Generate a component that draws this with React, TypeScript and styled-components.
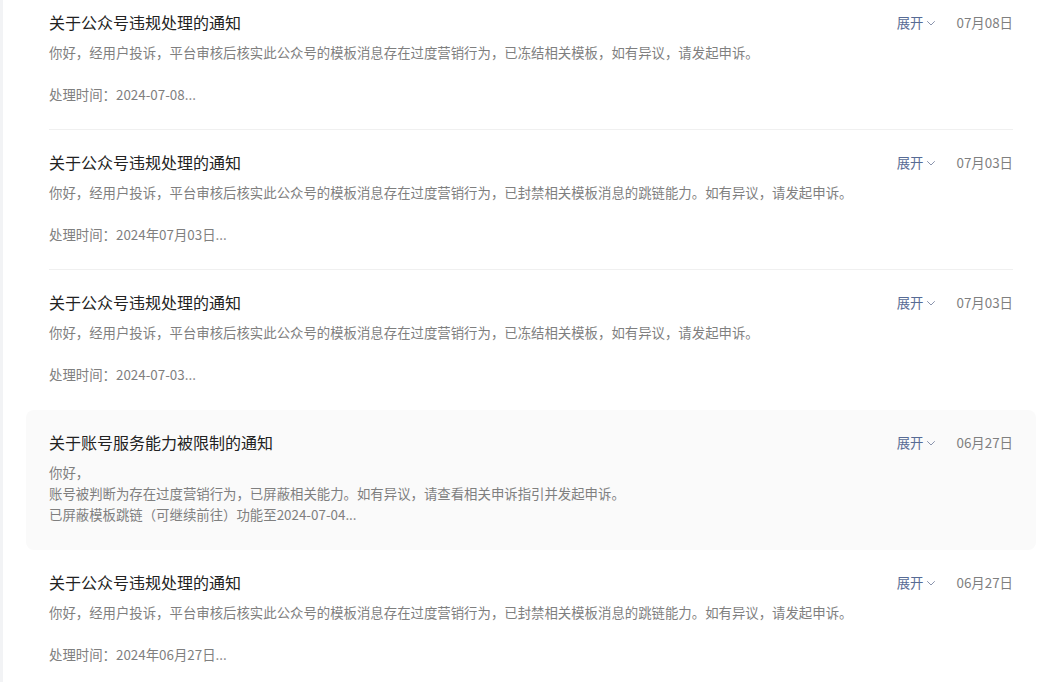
import React from "react";
import styled, { createGlobalStyle } from "styled-components";

const GlobalStyle = createGlobalStyle`
  html, body {
    margin: 0;
    padding: 0;
    background: #ffffff;
    overflow: hidden;
  }
  body {
    font-family: "Noto Sans CJK SC", "Noto Sans", "Liberation Sans", sans-serif;
    -webkit-font-smoothing: antialiased;
  }
`;

const Page = styled.div`
  display: flex;
  width: 1050px;
  height: 682px;
  overflow: hidden;
`;

const SideEdge = styled.div`
  width: 3px;
  flex: none;
  background: #f2f3f5;
`;

const Main = styled.main`
  flex: 1;
  padding: 0 14px 0 23px;
  overflow: hidden;
`;

const List = styled.ul`
  list-style: none;
  margin: -10px 0 0;
  padding: 0;
`;

const Item = styled.li<{ $active?: boolean }>`
  padding: 0 23px;
  border-radius: 8px;
  background: ${(p) => (p.$active ? "#fafafa" : "transparent")};
`;

const Inner = styled.div<{ $noDivider?: boolean }>`
  padding: 20px 0 24px;
  border-bottom: 1px solid ${(p) => (p.$noDivider ? "transparent" : "#f0f0f0")};
`;

const Header = styled.div`
  display: flex;
  align-items: center;
  justify-content: space-between;
  height: 24px;
`;

const Title = styled.h3`
  margin: 0;
  font-size: 16px;
  font-weight: 400;
  line-height: 24px;
  color: #222222;
`;

const Meta = styled.div`
  display: flex;
  align-items: center;
  gap: 21px;
`;

const Expand = styled.button`
  display: flex;
  align-items: center;
  gap: 4px;
  padding: 0;
  border: none;
  background: none;
  font-family: inherit;
  font-size: 13.4px;
  line-height: 20px;
  color: #576b95;
  cursor: pointer;
`;

const Chevron = styled.svg`
  width: 8px;
  height: 5px;
  margin-top: 2px;
  display: block;
`;

const DateText = styled.span`
  font-size: 13.4px;
  line-height: 20px;
  color: #7f7f7f;
`;

const Desc = styled.p`
  margin: 8px 0 0;
  font-size: 13.4px;
  line-height: 21px;
  color: #7f7f7f;
  white-space: pre-line;
`;

const FREEZE =
  "你好，经用户投诉，平台审核后核实此公众号的模板消息存在过度营销行为，已冻结相关模板，如有异议，请发起申诉。";
const BAN =
  "你好，经用户投诉，平台审核后核实此公众号的模板消息存在过度营销行为，已封禁相关模板消息的跳链能力。如有异议，请发起申诉。";

const items = [
  {
    title: "关于公众号违规处理的通知",
    date: "07月08日",
    body: `${FREEZE}\n\n处理时间：2024-07-08...`,
  },
  {
    title: "关于公众号违规处理的通知",
    date: "07月03日",
    body: `${BAN}\n\n处理时间：2024年07月03日...`,
  },
  {
    title: "关于公众号违规处理的通知",
    date: "07月03日",
    body: `${FREEZE}\n\n处理时间：2024-07-03...`,
  },
  {
    title: "关于账号服务能力被限制的通知",
    date: "06月27日",
    body:
      "你好，\n账号被判断为存在过度营销行为，已屏蔽相关能力。如有异议，请查看相关申诉指引并发起申诉。\n已屏蔽模板跳链（可继续前往）功能至2024-07-04...",
  },
  {
    title: "关于公众号违规处理的通知",
    date: "06月27日",
    body: `${BAN}\n\n处理时间：2024年06月27日...`,
  },
];

const ACTIVE = 3;

export default function App() {
  return (
    <>
      <GlobalStyle />
      <Page>
        <SideEdge />
        <Main>
          <List>
            {items.map((it, i) => (
              <Item key={i} $active={i === ACTIVE}>
                <Inner $noDivider={i === ACTIVE || i + 1 === ACTIVE}>
                  <Header>
                    <Title>{it.title}</Title>
                    <Meta>
                      <Expand type="button">
                        展开
                        <Chevron viewBox="0 0 8 5" fill="none">
                          <polyline
                            points="0.5,0.5 4,4 7.5,0.5"
                            stroke="#8a94ad"
                            strokeWidth="1"
                            strokeLinecap="round"
                            strokeLinejoin="round"
                          />
                        </Chevron>
                      </Expand>
                      <DateText>{it.date}</DateText>
                    </Meta>
                  </Header>
                  <Desc>{it.body}</Desc>
                </Inner>
              </Item>
            ))}
          </List>
        </Main>
      </Page>
    </>
  );
}
